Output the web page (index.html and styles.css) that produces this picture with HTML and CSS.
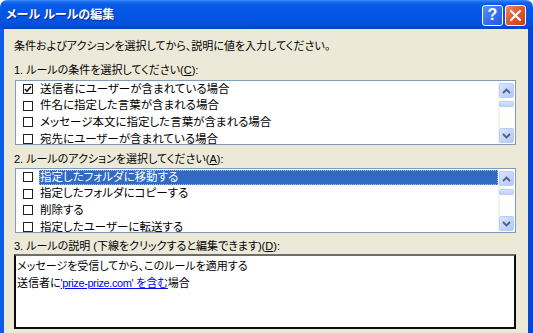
FILE: index.html
```html
<!DOCTYPE html>
<html lang="ja">
<head>
<meta charset="utf-8">
<title>メール ルールの編集</title>
<link rel="stylesheet" href="styles.css">
</head>
<body>
<div class="window">
  <div class="titlebar">
    <span class="title">メール ルールの編集</span>
    <div class="tb-buttons">
      <div class="tb-btn help">?</div>
      <div class="tb-btn close">
        <svg width="13" height="13" viewBox="0 0 13 13"><path d="M2 2 L11 11 M11 2 L2 11" stroke="#fff" stroke-width="2.2" stroke-linecap="round"/></svg>
      </div>
    </div>
  </div>
  <div class="frame">
    <div class="content">
      <p class="intro">条件およびアクションを選択してから、説明に値を入力してください。</p>

      <div class="label l1">1. ルールの条件を選択してください(<u>C</u>):</div>
      <div class="listbox lb1">
        <ul class="items">
          <li><span class="cb checked"><svg width="8" height="8" viewBox="0 0 8 8"><path d="M1 4 L3 6.2 L7 1.5" fill="none" stroke="#1a1a1a" stroke-width="1.6"/></svg></span><span class="txt">送信者にユーザーが含まれている場合</span></li>
          <li><span class="cb"></span><span class="txt">件名に指定した言葉が含まれる場合</span></li>
          <li><span class="cb"></span><span class="txt">メッセージ本文に指定した言葉が含まれる場合</span></li>
          <li><span class="cb"></span><span class="txt">宛先にユーザーが含まれている場合</span></li>
        </ul>
        <div class="scrollbar">
          <div class="sb-btn"><svg width="9" height="6" viewBox="0 0 9 6"><path d="M1 5 L4.5 1.5 L8 5" fill="none" stroke="#4d6185" stroke-width="1.8"/></svg></div>
          <div class="sb-thumb"></div>
          <div class="sb-space"></div>
          <div class="sb-btn"><svg width="9" height="6" viewBox="0 0 9 6"><path d="M1 1 L4.5 4.5 L8 1" fill="none" stroke="#4d6185" stroke-width="1.8"/></svg></div>
        </div>
      </div>

      <div class="label l2">2. ルールのアクションを選択してください(<u>A</u>):</div>
      <div class="listbox lb2">
        <ul class="items">
          <li class="selected"><span class="cb"></span><span class="txt">指定したフォルダに移動する</span></li>
          <li><span class="cb"></span><span class="txt">指定したフォルダにコピーする</span></li>
          <li><span class="cb"></span><span class="txt">削除する</span></li>
          <li><span class="cb"></span><span class="txt">指定したユーザーに転送する</span></li>
        </ul>
        <div class="scrollbar">
          <div class="sb-btn"><svg width="9" height="6" viewBox="0 0 9 6"><path d="M1 5 L4.5 1.5 L8 5" fill="none" stroke="#4d6185" stroke-width="1.8"/></svg></div>
          <div class="sb-thumb"></div>
          <div class="sb-space"></div>
          <div class="sb-btn"><svg width="9" height="6" viewBox="0 0 9 6"><path d="M1 1 L4.5 4.5 L8 1" fill="none" stroke="#4d6185" stroke-width="1.8"/></svg></div>
        </div>
      </div>

      <div class="label l3">3. ルールの説明 (下線をクリックすると編集できます)(<u>D</u>):</div>
      <div class="desc">
        <p>メッセージを受信してから、このルールを適用する</p>
        <p>送信者に<a class="link"><span class="latin">'prize-prize.com'</span> を含む</a>場合</p>
      </div>
    </div>
  </div>
</div>
</body>
</html>
```
FILE: styles.css
```css
* { box-sizing: border-box; margin: 0; padding: 0; }
html, body { width: 533px; height: 333px; overflow: hidden; }
body {
  background: #ffffff;
  font-family: "Liberation Sans", "Noto Sans CJK JP", sans-serif;
  font-size: 11px;
  color: #000;
  font-feature-settings: "palt";
}
.window {
  width: 533px;
  height: 333px;
  display: flex;
  flex-direction: column;
  border-radius: 7px 7px 0 0;
  overflow: hidden;
}
.titlebar {
  height: 29px;
  flex: none;
  display: flex;
  align-items: center;
  justify-content: space-between;
  padding: 0 7px 0 6px;
  background: linear-gradient(to bottom, #3a8bf7 0, #1a6cf0 2px, #0a5ce8 4px, #0557e6 10px, #0355e4 60%, #0450dc 85%, #0443c6 100%);
}
.title {
  color: #fff;
  font-weight: bold;
  font-size: 12px;
  line-height: 16px;
  text-shadow: 1px 1px 0 #0b2a8c;
}
.tb-buttons { display: flex; gap: 2px; padding-top: 1px; }
.tb-btn {
  width: 21px;
  height: 21px;
  border: 1px solid #fff;
  border-radius: 3px;
  display: flex;
  align-items: center;
  justify-content: center;
}
.help {
  background: linear-gradient(135deg, #5c95fa 0%, #3a74f0 45%, #2459dc 100%);
  color: #fff;
  font-family: "Liberation Sans", Arial, sans-serif;
  font-weight: bold;
  font-size: 16px;
  line-height: 1;
}
.close {
  background: linear-gradient(135deg, #f08a66 0%, #e45a30 45%, #cc3d16 100%);
}
.frame {
  flex: 1;
  display: flex;
  border-left: 4px solid #0a5de9;
  border-right: 5px solid #0846d2;
  min-height: 0;
}
.content {
  flex: 1;
  background: #ece9d8;
  padding: 9px 12px 0 10px;
  display: flex;
  flex-direction: column;
  min-width: 0;
}
.intro { line-height: 16px; height: 16px; white-space: nowrap; }
.label { line-height: 16px; height: 16px; white-space: nowrap; }
.label u { text-decoration: underline; }
.l1 { margin-top: 8px; }
.l2 { margin-top: 6px; }
.l3 { margin-top: 5px; }
.listbox {
  margin-left: 1px;
  height: 65px;
  background: #fff;
  border: 1px solid #7f9db9;
  display: flex;
  flex: none;
  overflow: hidden;
}
.lb1 { margin-top: 2px; }
.lb2 { margin-top: 1px; }
.items {
  list-style: none;
  flex: 1;
  min-width: 0;
  overflow: hidden;
  font-size: 11.5px;
}
.items li {
  height: 16.6px;
  display: flex;
  align-items: center;
  white-space: nowrap;
}
.cb {
  flex: none;
  width: 10px;
  height: 10px;
  margin-left: 7px;
  margin-right: 6px;
  border: 1px solid #222;
  background: #fff;
  display: flex;
  align-items: center;
  justify-content: center;
}
.txt {
  flex: 1;
  padding-left: 1px;
  line-height: 15px;
  height: 15px;
}
.selected .txt {
  background: #316ac5;
  color: #fff;
  outline: 1px dotted #a9c1ee;
  outline-offset: -1px;
}
.scrollbar {
  flex: none;
  width: 17px;
  padding: 2px 1px 1px 1px;
  display: flex;
  flex-direction: column;
  background: linear-gradient(to right, #f0efea 0, #fdfdfb 3px, #fefefe 100%);
}
.sb-btn {
  height: 15px;
  flex: none;
  border: 1px solid #b9cdf6;
  border-radius: 2px;
  background: linear-gradient(135deg, #dbe6fe 0%, #c5d6fc 50%, #b4c8f8 100%);
  display: flex;
  align-items: center;
  justify-content: center;
}
.sb-thumb {
  flex: none;
  height: 6px;
  margin-top: 3px;
  border: 1px solid #b9cdf6;
  border-radius: 2px;
  background: linear-gradient(to bottom, #d6e2fd, #bfd1fa);
}
.sb-space { flex: 1; }
.desc {
  height: 75px;
  flex: none;
  background: #fff;
  border: 2px solid #0c0c0c;
  border-top: 2px solid #6d6d6d;
  padding: 2px 4px 0 1px;
}
.desc p { line-height: 17px; height: 17px; white-space: nowrap; }
.link { color: #0000ff; text-decoration: underline; }
.latin { letter-spacing: -0.4px; }
```
